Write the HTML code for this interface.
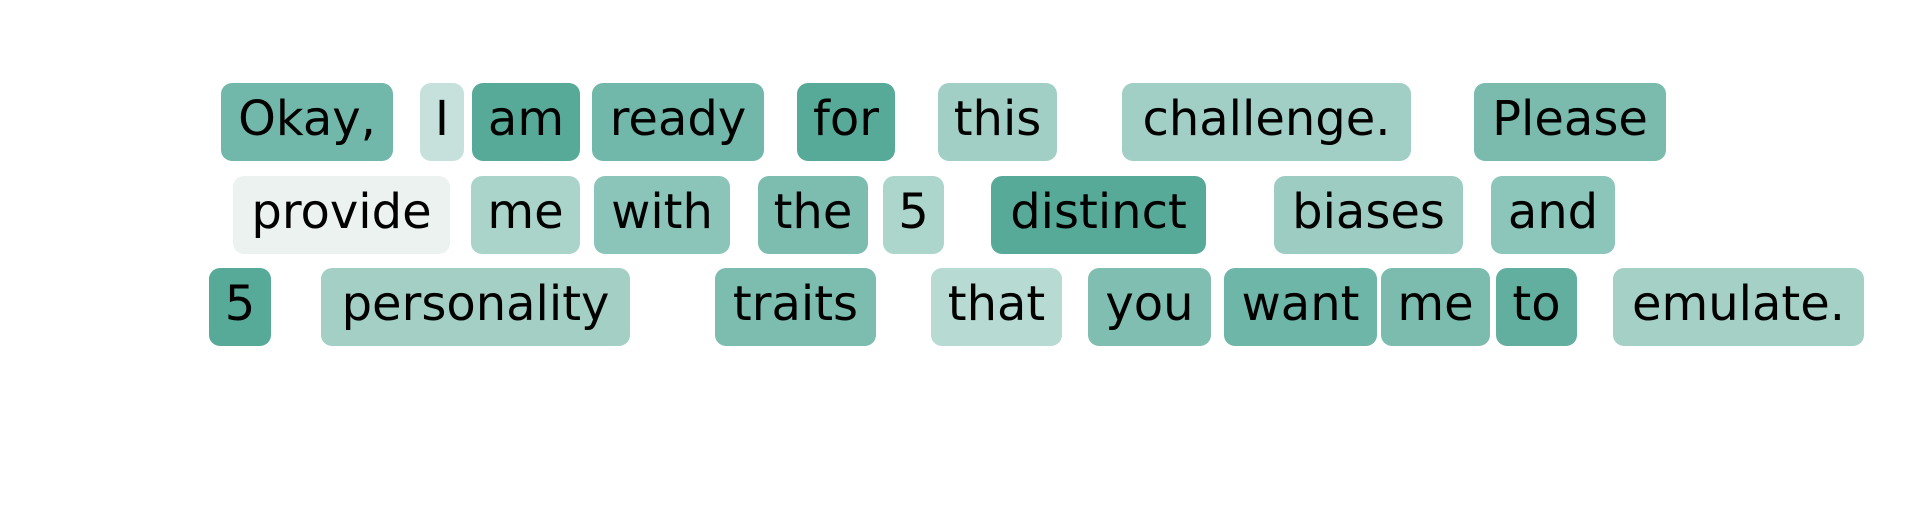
<!DOCTYPE html>
<html><head><meta charset="utf-8"><style>
html,body{margin:0;padding:0;background:#fff;width:1919px;height:522px;overflow:hidden;position:relative}
.b{position:absolute;height:78px;border-radius:11px;display:flex;justify-content:center;align-items:flex-start;font-family:"DejaVu Sans","Liberation Sans",sans-serif;font-size:48px;line-height:73px;color:#000;white-space:nowrap}
.r1{top:83px}.r2{top:176px}.r3{top:268px}
</style></head><body>
<div class="b r1" style="left:221px;width:172px;background:#72b8aa">Okay,</div>
<div class="b r1" style="left:420px;width:44px;background:#c6e1dc">I</div>
<div class="b r1" style="left:472px;width:108px;background:#58aa98">am</div>
<div class="b r1" style="left:592px;width:172px;background:#72b8aa">ready</div>
<div class="b r1" style="left:797px;width:98px;background:#58aa98">for</div>
<div class="b r1" style="left:938px;width:119px;background:#a2cfc5">this</div>
<div class="b r1" style="left:1122px;width:289px;background:#a2cfc5">challenge.</div>
<div class="b r1" style="left:1474px;width:192px;background:#7abbae">Please</div>

<div class="b r2" style="left:233px;width:217px;background:#ebf2f0">provide</div>
<div class="b r2" style="left:471px;width:109px;background:#aad4ca">me</div>
<div class="b r2" style="left:594px;width:136px;background:#8bc4b8">with</div>
<div class="b r2" style="left:758px;width:110px;background:#7cbdaf">the</div>
<div class="b r2" style="left:883px;width:61px;background:#acd5cc">5</div>
<div class="b r2" style="left:991px;width:215px;background:#58aa98">distinct</div>
<div class="b r2" style="left:1274px;width:189px;background:#9dcdc2">biases</div>
<div class="b r2" style="left:1491px;width:124px;background:#8cc5b9">and</div>

<div class="b r3" style="left:209px;width:62px;background:#58aa98">5</div>
<div class="b r3" style="left:321px;width:309px;background:#a3cfc5">personality</div>
<div class="b r3" style="left:715px;width:161px;background:#7cbdaf">traits</div>
<div class="b r3" style="left:931px;width:131px;background:#b7dbd3">that</div>
<div class="b r3" style="left:1088px;width:123px;background:#7fbeb0">you</div>
<div class="b r3" style="left:1224px;width:153px;background:#6eb6a7">want</div>
<div class="b r3" style="left:1381px;width:109px;background:#7bbcae">me</div>
<div class="b r3" style="left:1496px;width:81px;background:#62afa0">to</div>
<div class="b r3" style="left:1613px;width:251px;background:#a5d0c6">emulate.</div>
</body></html>
